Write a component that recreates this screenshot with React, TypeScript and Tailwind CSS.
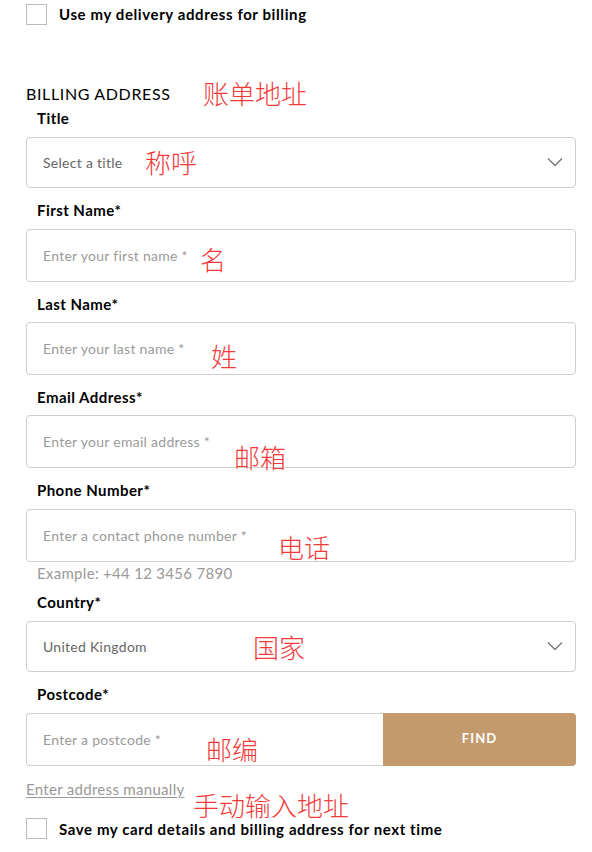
import React from 'react';

const note = 'absolute text-[26px] font-light leading-none text-[#f33a3a] whitespace-nowrap';
const cjk = { fontFamily: '"Noto Sans CJK SC", sans-serif' };

function Chevron() {
  return (
    <svg width="16" height="10" viewBox="0 0 16 10" fill="none" className="shrink-0">
      <path d="M1 1.5L8 8.5L15 1.5" stroke="#777" strokeWidth="1.4" />
    </svg>
  );
}

function Label({ children }: { children: React.ReactNode }) {
  return <div className="pl-[11px] text-[15px] font-bold leading-5 tracking-[0.03em] text-black">{children}</div>;
}

function TextField({ placeholder, className = '' }: { placeholder: string; className?: string }) {
  return (
    <div className={`flex h-[53px] items-center rounded border border-[#cfcfcf] px-4 ${className}`}>
      <span className="text-[14px] tracking-[0.02em] text-[#9a9a9a]">{placeholder}</span>
    </div>
  );
}

function SelectField({ value }: { value: string }) {
  return (
    <div className="flex h-[51px] items-center justify-between rounded border border-[#cfcfcf] pl-4 pr-3">
      <span className="text-[14px] tracking-[0.02em] text-[#666]">{value}</span>
      <Chevron />
    </div>
  );
}

function Checkbox({ label }: { label: string }) {
  return (
    <div className="flex items-center gap-3">
      <div className="h-[21px] w-[21px] border border-[#bbb] bg-white" />
      <span className="text-[15px] font-bold tracking-[0.04em] text-black">{label}</span>
    </div>
  );
}

export default function App() {
  return (
    <div className="relative h-[852px] w-[592px] bg-white" style={{ fontFamily: 'Lato, "Noto Sans", sans-serif' }}>
      <div className="pl-[26px] pr-[16px] pt-[3px]">
        <Checkbox label="Use my delivery address for billing" />

        <h2 className="mt-[58px] text-[16px] leading-5 tracking-[0.04em] text-black">BILLING ADDRESS</h2>

        <div className="mt-[4px]">
          <Label>Title</Label>
          <div className="mt-[9px]">
            <SelectField value="Select a title" />
          </div>
        </div>

        <div className="mt-[12px]">
          <Label>First Name*</Label>
          <TextField className="mt-[9px]" placeholder="Enter your first name *" />
        </div>

        <div className="mt-[12px]">
          <Label>Last Name*</Label>
          <TextField className="mt-[8px]" placeholder="Enter your last name *" />
        </div>

        <div className="mt-[12px]">
          <Label>Email Address*</Label>
          <TextField className="mt-[8px]" placeholder="Enter your email address *" />
        </div>

        <div className="mt-[12px]">
          <Label>Phone Number*</Label>
          <TextField className="mt-[9px]" placeholder="Enter a contact phone number *" />
          <div className="mt-[1px] pl-[11px] text-[15px] leading-5 tracking-[0.02em] text-[#999]">
            Example: +44 12 3456 7890
          </div>
        </div>

        <div className="mt-[9px]">
          <Label>Country*</Label>
          <div className="mt-[9px]">
            <SelectField value="United Kingdom" />
          </div>
        </div>

        <div className="mt-[12px]">
          <Label>Postcode*</Label>
          <div className="mt-[9px] flex h-[53px] items-stretch">
            <div className="flex flex-1 items-center rounded-l border border-r-0 border-[#cfcfcf] px-4">
              <span className="text-[14px] tracking-[0.02em] text-[#9a9a9a]">Enter a postcode *</span>
            </div>
            <button className="w-[193px] rounded-r bg-[#c49a6c] text-[13px] font-bold tracking-[0.08em] text-white">
              FIND
            </button>
          </div>
        </div>

        <div className="mt-[13px] text-[15px] leading-5 tracking-[0.02em] text-[#999] underline underline-offset-2">
          Enter address manually
        </div>

        <div className="mt-[19px]">
          <Checkbox label="Save my card details and billing address for next time" />
        </div>
      </div>

      <span className={note} style={{ ...cjk, left: 203, top: 80 }}>账单地址</span>
      <span className={note} style={{ ...cjk, left: 145, top: 149 }}>称呼</span>
      <span className={note} style={{ ...cjk, left: 200, top: 246 }}>名</span>
      <span className={note} style={{ ...cjk, left: 211, top: 343 }}>姓</span>
      <span className={note} style={{ ...cjk, left: 234, top: 444 }}>邮箱</span>
      <span className={note} style={{ ...cjk, left: 278, top: 534 }}>电话</span>
      <span className={note} style={{ ...cjk, left: 253, top: 634 }}>国家</span>
      <span className={note} style={{ ...cjk, left: 206, top: 736 }}>邮编</span>
      <span className={note} style={{ ...cjk, left: 193, top: 792 }}>手动输入地址</span>
    </div>
  );
}
